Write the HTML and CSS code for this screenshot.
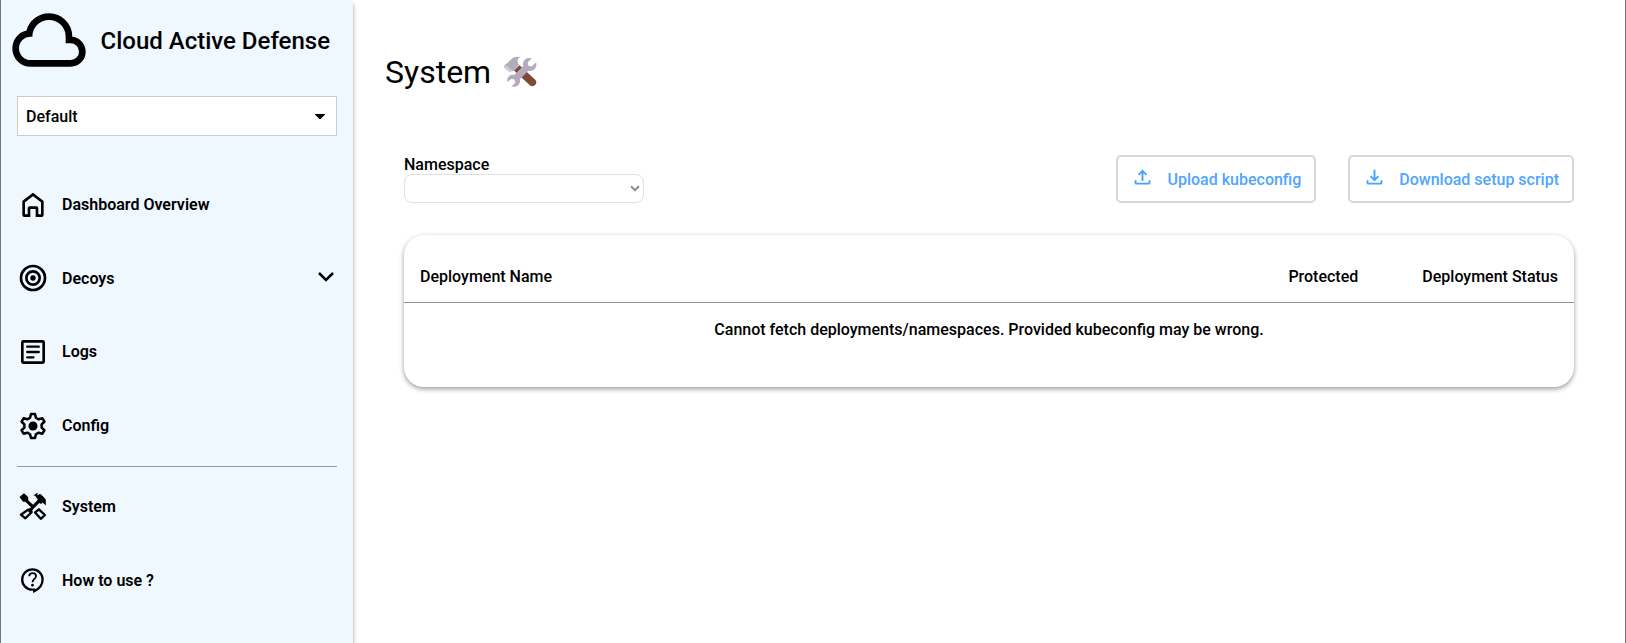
FILE: index.html
```html
<!DOCTYPE html>
<html lang="en">
<head>
<meta charset="utf-8">
<title>Cloud Active Defense</title>
<link rel="stylesheet" href="styles.css">
</head>
<body>
<div class="app">
  <aside class="sidebar">
    <header class="brand">
      <svg class="brand-logo" viewBox="0 0 24 24"><path d="M6.5 20Q4.22 20 2.61 18.43 1 16.85 1 14.58 1 12.63 2.17 11.1 3.35 9.57 5.25 9.15 5.88 6.85 7.75 5.43 9.63 4 12 4 14.93 4 16.96 6.04 19 8.07 19 11 20.73 11.2 21.86 12.5 23 13.78 23 15.5 23 17.38 21.69 18.69 20.38 20 18.5 20ZM6.5 18H18.5Q19.55 18 20.27 17.27 21 16.55 21 15.5 21 14.45 20.27 13.73 19.55 13 18.5 13H17V11Q17 8.93 15.54 7.46 14.08 6 12 6 9.93 6 8.46 7.46 7 8.93 7 11H6.5Q5.05 11 4.03 12.03 3 13.05 3 14.5 3 15.95 4.03 17 5.05 18 6.5 18Z" fill-rule="evenodd"/></svg>
      <span class="brand-name">Cloud Active Defense</span>
    </header>
    <div class="app-select">
      <span>Default</span>
      <svg class="caret" viewBox="0 0 10 5"><path d="M0 0h10v.6L5.6 5H4.4L0 .6z"/></svg>
    </div>
    <nav class="nav">
      <a class="nav-item">
        <svg class="icon line" viewBox="0 0 24 24"><path d="M5 9.500 12 4l7 5.500V19.500Q19 20 18.500 20H15V14.500Q15 14 14.500 14H9.500Q9 14 9 14.500V20H5.500Q5 20 5 19.500Z"/></svg>
        <span>Dashboard Overview</span>
      </a>
      <a class="nav-item">
        <svg class="icon line raised" viewBox="0 0 24 24"><circle cx="12" cy="12" r="9"/><circle cx="12" cy="12" r="5"/><circle class="solid" cx="12" cy="12" r="2"/></svg>
        <span>Decoys</span>
        <svg class="chevron" viewBox="0 0 16 10"><path d="m1 1 7 7 7-7"/></svg>
      </a>
      <a class="nav-item">
        <svg class="icon line" viewBox="0 0 24 24"><rect x="4" y="4" width="16" height="16" rx=".8"/><path class="round" d="M7.700 8h8.600M7.700 12h8.600M7.700 16h4.600"/></svg>
        <span>Logs</span>
      </a>
      <a class="nav-item">
        <svg class="icon cog" viewBox="-12 -12 24 24"><circle r="3.400"/><path d="M-2.200-6.200-1.500-9H1.500L2.200-6.200 4.270-5.010 7.040-5.800 8.540-3.200 6.470-1.190V1.190L8.540 3.200 7.040 5.800 4.270 5.010 2.200 6.200 1.500 9H-1.500L-2.200 6.200-4.270 5.010-7.040 5.800-8.540 3.200-6.470 1.190V-1.190L-8.540-3.200-7.040-5.800-4.270-5.010Z"/></svg>
        <span>Config</span>
      </a>
      <hr class="nav-divider">
      <a class="nav-item">
        <svg class="icon" viewBox="0 0 32 32"><path d="M2.500 6 7 2.300 11.200 6v3.300l4.800 4.500 4.800-5-2.800-4.300-1.800.3L20.500 1.500v3L23 2.800c2 1.500 4.300 3.500 5.800 6V14.500l-3.300-3-1.300 1.500-2-1L12.500 22l-1.500-2 3-3.700-5.700-5.600H6Z"/><path class="handle" d="m11 18.800 2.800-.7.800 3-6.200 6.200-4.500-3.600Z"/><path class="handle" d="m18.100 21.500 3.800-3.200 6 5.700-4.100 3.800Z"/></svg>
        <span>System</span>
      </a>
      <a class="nav-item nav-item-last">
        <svg class="icon help raised" viewBox="0 0 32 32"><path d="M17.200 25.700H15.200A10.200 10.200 0 1 1 25.600 15.400c0 5-3.200 9.200-8.400 11.800Z"/><path class="thin" d="M12.200 12.300c.2-4.300 6.800-4.100 6.800-.1 0 2.500-3.500 2.900-3.500 6"/><circle class="dot" cx="15.500" cy="21.200" r="1.400"/></svg>
        <span>How to use ?</span>
      </a>
    </nav>
  </aside>
  <main class="main">
    <h1 class="page-title">System
      <svg class="tools" viewBox="0 0 34 32"><path d="m10 14.500 5.500-5.200L31.500 24c2.600 3.500-1.600 8-5.400 5.500Z" fill="#7c4a35"/><path d="m0 10 7.500-7C10 .5 14 0 16.500 1.500c-3 1-4 3-1.500 7.500l-5.800 6.500-1.900-1.200-3.100.7L.3 11.500Z" fill="#b5abc0"/><path d="M0 11 2.500 9.500l6 5.500-3.200 1.300Z" fill="#d3cadb"/><path d="m10.200 19 9-9c-1.300-5 3-9.200 8.500-7.500l-4 4 .7 3.200 3.200.7 4.500-4.200c1.600 6-3 9.600-7.800 8.600l-8.500 8.500c1.200 5-3.300 8.500-8.300 7.300l3.800-3.900-.7-3.300-3.300-.3L3.500 26C2.300 21.700 5.500 17.800 10.200 19Z" fill="#b5abc0"/></svg>
    </h1>
    <div class="toolbar">
      <div class="field">
        <label class="field-label">Namespace</label>
        <div class="field-select"><svg viewBox="0 0 10 7"><path d="m1 1.200 4 4 4-4"/></svg></div>
      </div>
      <div class="actions">
        <button class="btn"><svg viewBox="0 0 24 24"><path d="M12 16V5M7.500 9 12 4.500 16.500 9M4 15v3q0 1 1 1h14q1 0 1-1v-3"/></svg><span>Upload kubeconfig</span></button>
        <button class="btn"><svg viewBox="0 0 24 24"><path d="M12 3v11M7.500 10.500 12 15l4.500-4.500M4 15v3q0 1 1 1h14q1 0 1-1v-3"/></svg><span>Download setup script</span></button>
      </div>
    </div>
    <section class="card">
      <div class="card-head">
        <span class="col-name">Deployment Name</span>
        <span>Protected</span>
        <span>Deployment Status</span>
      </div>
      <p class="card-message">Cannot fetch deployments/namespaces. Provided kubeconfig may be wrong.</p>
    </section>
  </main>
</div>
</body>
</html>
```
FILE: styles.css
```css
* { box-sizing: border-box; }

body {
  margin: 0;
  background: #fff;
  color: #000;
  font: 500 16px/20px Roboto, sans-serif;
}

.app {
  display: flex;
  height: 643px;
  border-left: 1px solid #77757a;
  border-right: 1px solid #77757a;
  overflow: hidden;
}

.sidebar {
  width: 352px;
  flex: none;
  background: #eff7ff;
  box-shadow: 1px 4px 3px rgba(0, 0, 0, .25);
}

.brand {
  display: flex;
  align-items: center;
  height: 80px;
  padding-left: 8px;
}
.brand-logo { width: 80px; height: 80px; }
.brand-name { margin: 1px 0 0 11.500px; font-size: 24px; line-height: 30px; }

.app-select {
  display: flex;
  align-items: center;
  justify-content: space-between;
  height: 40px;
  margin: 16px 16px 0;
  padding: 1px 11px 0 8px;
  background: #fff;
  border: 1px solid #ccc;
}
.caret { width: 10px; height: 5px; margin-bottom: 1px; }

.nav { padding: 32px 16px 0; }
.nav-item {
  display: flex;
  align-items: center;
  height: 73.700px;
  font-weight: 600;
}
.nav-item-last { height: 75px; }
.icon { width: 32px; height: 32px; margin-right: 13px; }
.raised { margin-bottom: 2px; }
.line { fill: none; stroke: #000; stroke-width: 2; }
.line .solid { fill: #000; stroke: none; }
.line .round { stroke-linecap: round; stroke-width: 1.800; }
.cog path { fill: none; stroke: #000; stroke-width: 1.900; stroke-linejoin: round; }
.handle { fill: none; stroke: #000; stroke-width: 2.300; stroke-linejoin: round; }
.help { fill: none; stroke: #000; stroke-width: 2.300; }
.help .thin { stroke-width: 1.800; }
.help .dot { fill: #000; stroke: none; }
.chevron {
  width: 16px;
  height: 10px;
  margin: 0 3px 3px auto;
  fill: none;
  stroke: #000;
  stroke-width: 2.500;
}
.nav-divider {
  height: 1px;
  margin: 3px 0;
  border: 0;
  background: #999;
}

.main { flex: 1; padding: 0 51px 0 32px; }
.page-title {
  display: flex;
  align-items: center;
  gap: 13px;
  height: 40px;
  margin: 52px 0 0;
  font-size: 32px;
  font-weight: 400;
}
.tools { width: 34px; height: 32px; }

.toolbar {
  display: flex;
  justify-content: space-between;
  margin: 63px 0 0 19px;
}
.field { width: 240px; }
.field-label { display: block; height: 19px; }
.field-select {
  display: flex;
  align-items: center;
  justify-content: flex-end;
  height: 29px;
  padding-right: 3px;
  border: 1px solid #e0e0e0;
  border-radius: 8px;
}
.field-select svg { width: 10px; height: 7px; fill: none; stroke: #8c8c8c; stroke-width: 2; }

.actions { display: flex; gap: 32px; }
.btn {
  display: flex;
  align-items: center;
  height: 48px;
  padding: 1px 13px 0 14px;
  border: 2px solid #d8d8d8;
  border-radius: 5px;
  background: #fff;
  color: #4fa5ff;
  font: inherit;
}
.btn svg {
  width: 21px;
  height: 21px;
  margin: 0 14px 5px 0;
  fill: none;
  stroke: #46a4ff;
  stroke-width: 2.200;
}

.card {
  height: 152px;
  margin: 32px 0 0 19px;
  border-radius: 20px;
  box-shadow: 0 2px 5px rgba(0, 0, 0, .4);
}
.card-head {
  display: flex;
  align-items: center;
  gap: 64px;
  height: 68px;
  padding: 17px 16px 0;
  border-bottom: 1px solid #929292;
}
.col-name { flex: 1; }
.card-message { margin: 17px 0 0; text-align: center; }
```
